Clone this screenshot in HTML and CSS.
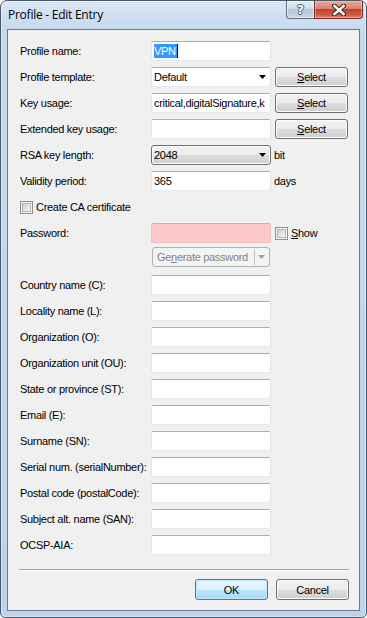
FILE: index.html
```html
<!DOCTYPE html>
<html>
<head>
<meta charset="utf-8">
<link rel="stylesheet" href="styles.css">
</head>
<body>
<div class="window">
  <div class="titlebar">
    <span class="title">Profile - Edit Entry</span>
    <div class="controls">
      <div class="cbtn help"><span class="q">?</span></div>
      <div class="cbtn close">
        <svg width="14" height="12" viewBox="0 0 14 12">
          <path d="M2 1.5L12 10.5M12 1.5L2 10.5" stroke="#3a2a28" stroke-width="4.4" stroke-linecap="square"/>
          <path d="M2.4 2L11.6 10M11.6 2L2.4 10" stroke="#ffffff" stroke-width="2.4" stroke-linecap="square"/>
        </svg>
      </div>
    </div>
  </div>
  <div class="client">
    <div class="form">
      <div class="row">
        <span class="lbl">Profile name:</span>
        <div class="field"><span class="selected">VPN</span><span class="caret"></span></div>
      </div>
      <div class="row">
        <span class="lbl">Profile template:</span>
        <div class="field combo"><span class="ftext">Default</span><svg class="arrow" width="7" height="4" viewBox="0 0 7 4"><path d="M0 0H7L3.5 4Z" fill="#000"/></svg></div>
        <div class="btn sel"><span><u>S</u>elect</span></div>
      </div>
      <div class="row">
        <span class="lbl">Key usage:</span>
        <div class="field"><span class="ftext">critical,digitalSignature,k</span></div>
        <div class="btn sel"><span><u>S</u>elect</span></div>
      </div>
      <div class="row">
        <span class="lbl">Extended key usage:</span>
        <div class="field"></div>
        <div class="btn sel"><span><u>S</u>elect</span></div>
      </div>
      <div class="row">
        <span class="lbl">RSA key length:</span>
        <div class="dropbtn"><span class="ftext">2048</span><svg class="arrow" width="7" height="4" viewBox="0 0 7 4"><path d="M0 0H7L3.5 4Z" fill="#000"/></svg></div>
        <span class="unit">bit</span>
      </div>
      <div class="row">
        <span class="lbl">Validity period:</span>
        <div class="field"><span class="ftext">365</span></div>
        <span class="unit">days</span>
      </div>
      <div class="row">
        <span class="check"></span>
        <span class="checklbl">Create CA certificate</span>
      </div>
      <div class="row pw">
        <span class="lbl">Password:</span>
        <div class="field pink"></div>
        <span class="check show"></span>
        <span class="showlbl"><u>S</u>how</span>
      </div>
      <div class="row gen">
        <span class="lbl"></span>
        <div class="split">
          <span class="gtext">Ge<u>n</u>erate password</span>
          <span class="divider"></span>
          <svg class="arrow" width="7" height="4" viewBox="0 0 7 4"><path d="M0 0H7L3.5 4Z" fill="#a0a0a0"/></svg>
        </div>
      </div>
      <div class="row"><span class="lbl">Country name (C):</span><div class="field"></div></div>
      <div class="row"><span class="lbl">Locality name (L):</span><div class="field"></div></div>
      <div class="row"><span class="lbl">Organization (O):</span><div class="field"></div></div>
      <div class="row"><span class="lbl">Organization unit (OU):</span><div class="field"></div></div>
      <div class="row"><span class="lbl">State or province (ST):</span><div class="field"></div></div>
      <div class="row"><span class="lbl">Email (E):</span><div class="field"></div></div>
      <div class="row"><span class="lbl">Surname (SN):</span><div class="field"></div></div>
      <div class="row"><span class="lbl">Serial num. (serialNumber):</span><div class="field"></div></div>
      <div class="row"><span class="lbl">Postal code (postalCode):</span><div class="field"></div></div>
      <div class="row"><span class="lbl">Subject alt. name (SAN):</span><div class="field"></div></div>
      <div class="row"><span class="lbl">OCSP-AIA:</span><div class="field"></div></div>
    </div>
    <div class="footer">
      <div class="sep"></div>
      <div class="buttons">
        <div class="btn big default"><span>OK</span></div>
        <div class="btn big"><span>Cancel</span></div>
      </div>
    </div>
  </div>
</div>
</body>
</html>
```

FILE: styles.css
```css
html, body {
  margin: 0;
  padding: 0;
  background: #ffffff;
}

.window {
  width: 367px;
  height: 618px;
  box-sizing: border-box;
  border: 1px solid #4b5867;
  border-radius: 7px 7px 5px 5px;
  background: linear-gradient(to bottom, #dae7f5 0px, #c6d9ee 28px, #bcd3eb 100%);
  padding: 0 6px 6px 6px;
  display: flex;
  flex-direction: column;
  box-shadow: inset 0 0 0 1px rgba(255,255,255,0.45);
  font-family: "Liberation Sans", Arial, sans-serif;
  font-size: 11px;
  color: #000;
}

.titlebar {
  height: 28px;
  display: flex;
  align-items: flex-start;
  padding-left: 1px;
}

.title {
  font-family: "Open Sans", "Noto Sans", sans-serif;
  font-size: 12px;
  letter-spacing: -0.25px;
  color: #000;
  margin-top: 5px;
  line-height: 17px;
}

.controls {
  margin-left: auto;
  margin-right: -3px;
  display: flex;
}

.cbtn {
  height: 18px;
  box-sizing: border-box;
  border: 1px solid #5f6f82;
  border-top: none;
  display: flex;
  align-items: center;
  justify-content: center;
}

.help {
  width: 28px;
  border-radius: 0 0 0 4px;
  border-right: none;
  background: linear-gradient(to bottom, #e4ecf4 0%, #d2dde9 45%, #b7c8da 50%, #c4d4e4 100%);
  box-shadow: inset 0 0 0 1px rgba(255,255,255,0.5);
}

.q {
  font-family: "DejaVu Sans", sans-serif;
  font-weight: bold;
  font-size: 12px;
  color: #ffffff;
  line-height: 12px;
  text-shadow: 1px 0 0 #4d5b6b, -1px 0 0 #4d5b6b, 0 1px 0 #4d5b6b, 0 -1px 0 #4d5b6b;
}

.close {
  width: 49px;
  border-radius: 0 0 4px 0;
  border-color: #6e2b20;
  background: linear-gradient(to bottom, #e8a995 0%, #d88371 45%, #c0422b 50%, #d25e47 85%, #e08a72 100%);
  box-shadow: inset 0 0 0 1px rgba(255,220,210,0.45);
}

.client {
  flex: 1;
  border: 1px solid #687b91;
  background: #f0f0f0;
  display: flex;
  flex-direction: column;
  letter-spacing: -0.3px;
}

.form {
  padding: 11px 10px 0 12px;
  display: flex;
  flex-direction: column;
}

.row {
  height: 20px;
  margin-bottom: 6px;
  display: flex;
  align-items: center;
}

.row.pw {
  margin-bottom: 4px;
}

.row.gen {
  margin-bottom: 8px;
}

.lbl {
  width: 131px;
  flex: none;
  white-space: nowrap;
}

.field {
  width: 120px;
  height: 20px;
  box-sizing: border-box;
  flex: none;
  background: #ffffff;
  border: 1px solid #e2e3ea;
  border-top-color: #abadb3;
  border-bottom-color: #e3e9ef;
  border-radius: 2px;
  display: flex;
  align-items: center;
  padding-left: 2px;
  overflow: hidden;
  white-space: nowrap;
}

.ftext {
  white-space: nowrap;
}

.selected {
  background: #3399ff;
  color: #ffffff;
  line-height: 14px;
  padding: 0 1px 0 0;
}

.caret {
  width: 1px;
  height: 14px;
  background: #000;
}

.combo .arrow,
.dropbtn .arrow {
  margin-left: auto;
  margin-right: 4px;
  flex: none;
}

.pink {
  background: #ffc8c8;
  border-color: #f0c0c0;
  border-top-color: #d8a8a8;
}

.btn {
  height: 20px;
  box-sizing: border-box;
  flex: none;
  border: 1px solid #707070;
  border-radius: 3px;
  background: linear-gradient(to bottom, #f2f2f2 0%, #ebebeb 50%, #dddddd 50%, #cfcfcf 100%);
  box-shadow: inset 0 0 0 1px #fcfcfc;
  display: flex;
  align-items: center;
  justify-content: center;
}

.btn.sel {
  width: 73px;
  margin-left: 4px;
}

.dropbtn {
  width: 120px;
  height: 20px;
  box-sizing: border-box;
  flex: none;
  border: 1px solid #707070;
  border-radius: 3px;
  background: linear-gradient(to bottom, #f2f2f2 0%, #ebebeb 50%, #dddddd 50%, #cfcfcf 100%);
  box-shadow: inset 0 0 0 1px #fcfcfc;
  display: flex;
  align-items: center;
  padding-left: 2px;
}

.unit {
  margin-left: 3px;
}

.check {
  width: 13px;
  height: 13px;
  box-sizing: border-box;
  flex: none;
  border: 1px solid #8e8f8f;
  background: #f4f4f4;
  position: relative;
}

.check::after {
  content: "";
  position: absolute;
  left: 1px;
  top: 1px;
  width: 9px;
  height: 9px;
  box-sizing: border-box;
  border: 1px solid #b3b3b3;
  background: linear-gradient(135deg, #cbcfd5 0%, #e6e6e6 60%, #f6f6f6 100%);
}

.checklbl {
  margin-left: 3px;
}

.check.show {
  margin-left: 4px;
  margin-top: 1px;
}

.showlbl {
  margin-left: 3px;
}

.split {
  width: 118px;
  height: 20px;
  box-sizing: border-box;
  margin-left: 1px;
  flex: none;
  border: 1px solid #adb2b5;
  border-radius: 3px;
  background: #f4f4f4;
  display: flex;
  align-items: center;
  color: #838383;
}

.gtext {
  margin-left: 4px;
  white-space: nowrap;
}

.divider {
  width: 1px;
  height: 16px;
  background: #c3c3c3;
  margin-left: auto;
  margin-right: 3px;
}

.split .arrow {
  margin-right: 4px;
}

.footer {
  margin-top: auto;
  padding: 0 10px 10px 11px;
  display: flex;
  flex-direction: column;
}

.sep {
  border-top: 1px solid #a0a0a0;
  border-bottom: 1px solid #ffffff;
  height: 0;
}

.buttons {
  margin-top: 8px;
  display: flex;
  justify-content: flex-end;
  gap: 8px;
}

.btn.big {
  width: 73px;
  height: 21px;
}

.btn.default {
  border-color: #3c7fb1;
  background: linear-gradient(to bottom, #eaf6fd 0%, #d9f0fc 50%, #bee6fd 50%, #a7d9f5 100%);
  box-shadow: inset 0 0 0 1px #bfe9fb;
}
```
